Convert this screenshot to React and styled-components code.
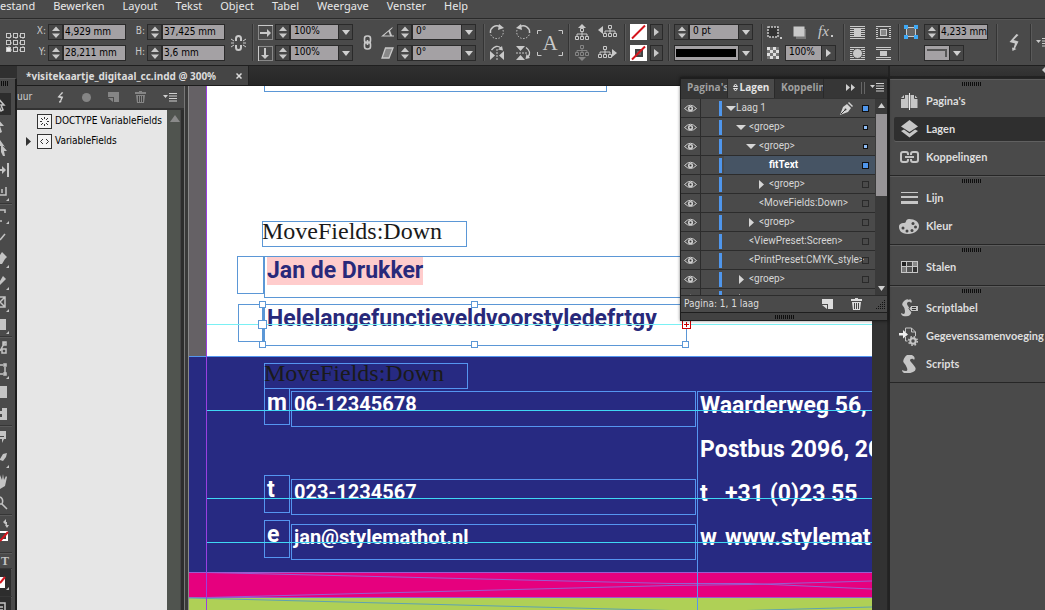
import React, { useState } from 'react';
import styled, { createGlobalStyle } from 'styled-components';

const GlobalStyle = createGlobalStyle`
  * { box-sizing: border-box; }
  body {
    margin: 0;
    background: #4a4a4a;
    overflow: hidden;
  }
  button, input, select {
    margin: 0;
    padding: 0;
    border: 0;
    border-radius: 0;
    background: none;
    color: inherit;
    font: inherit;
  }
  button { display: flex; align-items: center; justify-content: center; }
  ul { list-style: none; margin: 0; padding: 0; }
  svg { display: block; flex: none; }
`;

const Shell = styled.div`
  height: 100vh;
  display: flex;
  flex-direction: column;
  background: #4a4a4a;
  color: #dcdcdc;
  font-family: 'DejaVu Sans Condensed', 'DejaVu Sans', sans-serif;
  font-size: 10px;
  line-height: 14px;
`;

/* ---------- menu ---------- */

const MenuBar = styled.nav`
  display: flex;
  flex: none;
  gap: 18px;
  height: 18px;
  font-family: 'Noto Sans', sans-serif;
  font-size: 11px;
  line-height: 12px;
  white-space: nowrap;
`;

const MenuItem = styled.button`
  color: #e8e8e8;
  align-items: flex-start;
`;

/* ---------- control bar ---------- */

const ControlBar = styled.div`
  display: flex;
  flex: none;
  align-items: center;
  height: 48px;
  padding: 5px 0 4px 6px;
  border-top: 1px solid #2a2a2a;
  border-bottom: 1px solid #1f1f1f;
  box-shadow: inset 0 1px 0 #565656;
  color: #c9c9c9;
  overflow: hidden;
`;

const Divider = styled.span`
  flex: none;
  width: 2px;
  height: 37px;
  margin: 0 ${(p) => p.$after}px 0 ${(p) => p.$before}px;
  background: #343434;
  border-right: 1px solid #5a5a5a;
`;

const Stack = styled.div`
  display: grid;
  flex: none;
  grid-auto-rows: 16px;
  gap: 5px;
  margin-left: ${(p) => p.$ml || 0}px;
`;

const Row = styled.div`
  display: flex;
  align-items: center;
  gap: ${(p) => p.$gap || 0}px;
`;

const FieldGrid = styled.div`
  display: grid;
  flex: none;
  grid-template-columns: auto auto;
  grid-auto-rows: 16px;
  gap: 5px 9px;
  margin-left: 10px;
`;

const FieldLabel = styled.label`
  width: 12px;
  padding: 0 2px 2px 0;
  text-align: right;
`;

const SpinBox = styled.button`
  flex: none;
  width: 15px;
  height: 16px;
  border: 1px solid #2a2a2a;
  background: #474747;
`;

const ValueInput = styled.input`
  width: ${(p) => p.$w}px;
  height: 16px;
  padding: 0 0 2px 1px;
  border: 1px solid #2a2a2a;
  background: #a4a1a4;
  color: #000;
  line-height: 12px;
`;

const ComboBox = styled.span`
  display: grid;
  grid-template-columns: 1fr 14px;
  flex: none;
  width: ${(p) => p.$w}px;
  height: 16px;
  border: 1px solid #2a2a2a;
  background: #a4a1a4;
  color: #000;

  select {
    grid-area: 1 / 1 / 2 / 3;
    width: 100%;
    height: 14px;
    padding: 0 0 2px 3px;
    appearance: none;
    outline: none;
    line-height: 12px;
  }
  > span {
    grid-area: 1 / 2;
    display: flex;
    align-items: center;
    justify-content: center;
    border-left: 1px solid #2a2a2a;
    background: #474747;
    color: #d0d0d0;
    pointer-events: none;
  }
`;

const StrokePreview = styled.i`
  grid-area: 1 / 1;
  margin: 3px 2px 3px 1px;
  background: #000;
`;

const CornerPreview = styled.i`
  grid-area: 1 / 1;
  margin: 3px 2px 3px 2px;
  border-top: 2px solid #555;
  border-right: 2px solid #555;
`;

const IconButton = styled.button`
  flex: none;
  width: ${(p) => p.$w || 16}px;
  height: ${(p) => p.$h || 16}px;
  margin-left: ${(p) => p.$ml || 0}px;
  color: ${(p) => p.$color || 'inherit'};
`;

const ArrowButton = styled.button`
  width: 13px;
  height: 16px;
  border: 1px solid #2a2a2a;
  background: #474747;
`;

/* ---------- workspace ---------- */

const Workspace = styled.div`
  position: relative;
  flex: 1;
  min-height: 0;
  display: grid;
  grid-template-columns: 17px minmax(0, 1fr) 157px;
  background: #303030;
`;

const Toolbox = styled.aside`
  margin-top: 12px;
  border-right: 2px solid #1d1d1d;
  border-top: 1px solid #5a5a5a;
  background: #4a4a4a;
  color: #c4c4c4;
  overflow: hidden;
`;

const ToolGrip = styled.div`
  height: 14px;
  padding: 2px 0 0 1px;
`;

const Tool = styled.button`
  width: ${(p) => (p.$on ? 11 : 12)}px;
  height: ${(p) => p.$h || 22}px;
  justify-content: flex-start;
  background: ${(p) => (p.$on ? '#2d2d2d' : 'none')};
`;

const ToolLine = styled.div`
  height: 2px;
  margin-right: 3px;
  margin-bottom: -1px;
  background: #363636;
  border-bottom: 1px solid #5a5a5a;
`;

const Center = styled.div`
  display: flex;
  flex-direction: column;
  min-width: 0;
`;

const TabStrip = styled.div`
  flex: none;
  height: 20px;
  background: linear-gradient(#303030, #262626);
  border-bottom: 1px solid #1c1c1c;
`;

const DocumentTab = styled.div`
  display: flex;
  align-items: center;
  justify-content: space-between;
  width: 232px;
  height: 19px;
  padding: 0 6px 0 9px;
  background: #454545;
  border-right: 1px solid #222;
  font-family: 'Noto Sans', sans-serif;
  font-size: 10px;
  font-weight: 700;
  white-space: nowrap;
`;

const DocumentRow = styled.div`
  flex: 1;
  min-height: 0;
  display: flex;
`;

const StructurePanel = styled.section`
  flex: none;
  display: flex;
  flex-direction: column;
  width: 167px;
  background: #4a4a4a;
`;

const StructureHeader = styled.header`
  display: flex;
  align-items: center;
  height: 24px;
  border-bottom: 2px solid #333;
  color: #d0d0d0;
`;

const StructureBody = styled.div`
  flex: 1;
  display: grid;
  grid-template-columns: 1fr 14px 3px;
  background: #2d2d2d;
`;

const Tree = styled.ul`
  && { padding-top: 1px; }
  background: #e6e6e6;
  color: #000;
`;

const TreeItem = styled.li`
  display: flex;
  align-items: center;
  height: 20px;
  gap: 3px;
  padding-left: 8px;
  white-space: nowrap;
`;

const TreeArrow = styled.span`
  width: 9px;
`;

const StructureScroll = styled.div`
  padding: 5px 0 0 3px;
  background: #50544f;
  border-right: 1px solid #464646;
`;

const Splitter = styled.div`
  flex: none;
  width: 5px;
  background: #3a3a3a;
  border-left: 1px solid #777;
  border-right: 1px solid #8a8a8a;
`;

const DocumentScroll = styled.div`
  flex: none;
  width: 16px;
  background: #323232;
  border-right: 1px solid #252525;
`;

/* ---------- document ---------- */

const Canvas = styled.main`
  position: relative;
  flex: 1;
  min-width: 0;
  overflow: hidden;
  background: #656165;
`;

const Paper = styled.div`
  position: absolute;
  left: ${(p) => p.$x}px;
  right: 0;
  top: ${(p) => p.$y}px;
  height: ${(p) => p.$h}px;
  background: ${(p) => p.$color};
`;

const Frame = styled.div`
  position: absolute;
  left: ${(p) => p.$x}px;
  top: ${(p) => p.$y}px;
  width: ${(p) => p.$w}px;
  height: ${(p) => p.$h}px;
  border: 1px solid ${(p) => (p.$dark ? '#5596f0' : '#5b97d6')};
  white-space: nowrap;
`;

const Guide = styled.div`
  position: absolute;
  left: ${(p) => p.$x ?? 17}px;
  right: 0;
  top: ${(p) => p.$y}px;
  height: 1px;
  background: ${(p) => p.$color || '#3fd8f4'};
`;

const Margin = styled.div`
  position: absolute;
  left: 17px;
  top: 0;
  bottom: 0;
  width: 1px;
  background: #9a3fe0;
`;

const SerifLine = styled.p`
  margin: -4px 0 0 -1px;
  color: #1a1a1a;
  font-family: 'Liberation Serif', serif;
  font-size: 24px;
  line-height: 26px;
`;

const CardLine = styled.p`
  display: flex;
  margin: 0 0 16px;
  padding-left: 2px;
  color: ${(p) => p.$color || '#fff'};
  font-family: Roboto, sans-serif;
  font-size: ${(p) => (p.$small ? 20 : 23)}px;
  font-weight: 700;
  line-height: ${(p) => (p.$small ? 24 : 28)}px;

  mark {
    background: #ffcccc;
    color: inherit;
  }
  abbr { width: 25px; }
`;

const Handle = styled.span`
  position: absolute;
  left: ${(p) => p.$x};
  top: ${(p) => p.$y};
  width: ${(p) => p.$s || 7}px;
  height: ${(p) => p.$s || 7}px;
  margin: ${(p) => (p.$s ? '-5px' : '-4px')};
  border: 1px solid #5b97d6;
  background: #fff;
`;

const OutPort = styled.span`
  position: absolute;
  left: 100%;
  top: 50%;
  margin: -5px -4px;
`;

const Waves = styled.svg`
  position: absolute;
  left: 0;
  top: 486px;
`;

/* ---------- layers panel ---------- */

const FloatingPanel = styled.section`
  position: absolute;
  right: 157px;
  top: 11px;
  width: 208px;
  padding: 2px 1px 1px;
  background: #1e1e1e;
  box-shadow: 0 0 3px rgba(0, 0, 0, 0.5);
`;

const PanelTabs = styled.div`
  display: flex;
  height: 19px;
  background: #363636;
  color: #a0a0a0;
  font-family: 'Open Sans', sans-serif;
  font-size: 10px;
  font-weight: 700;
  white-space: nowrap;
`;

const PanelTab = styled.button`
  flex: none;
  width: ${(p) => p.$w}px;
  gap: 2px;
  padding-left: ${(p) => (p.$on ? 0 : 6)}px;
  padding-bottom: 3px;
  justify-content: ${(p) => (p.$on ? 'center' : 'flex-start')};
  overflow: hidden;
  background: ${(p) => (p.$on ? '#4a4a4a' : 'transparent')};
  color: ${(p) => (p.$on ? '#e4e4e4' : 'inherit')};
  border-right: 1px solid #2a2a2a;
`;

const PanelTools = styled.div`
  flex: 1;
  display: flex;
  align-items: center;
  justify-content: flex-end;
  gap: 5px;
  padding: 0 3px 2px 0;
  color: #cfcfcf;
`;

const PanelBody = styled.div`
  display: grid;
  grid-template-columns: 1fr 12px;
  height: 197px;
  border-top: 1px solid #333;
  background: #4a4a4a;
`;

const LayerList = styled.ul`
  overflow: hidden;
`;

const LayerRow = styled.li`
  display: grid;
  grid-template-columns: 20px 18px 3px 1fr;
  height: 19px;
  border-bottom: 1px solid #2c2c2c;
`;

const EyeCell = styled.button`
  border-right: 1px solid #2c2c2c;
  color: #cfcfcf;
`;

const LayerColor = styled.span`
  grid-column: 3;
  margin: 2px 0 1px;
  background: #4f96ec;
`;

const LayerName = styled.div`
  display: flex;
  align-items: center;
  margin-left: 2px;
  padding-left: ${(p) => 2 + p.$level * 10}px;
  padding-right: 6px;
  background: ${(p) => (p.$on ? '#465464' : 'none')};
  color: ${(p) => (p.$on ? '#fff' : '#d6d6d6')};
  font-family: Roboto, sans-serif;
  font-weight: ${(p) => (p.$on ? 700 : 400)};
  white-space: nowrap;
  min-width: 0;

  > span:first-child {
    flex: none;
    width: ${(p) => (p.$level ? 13 : 10)}px;
  }
  > b {
    flex: 1;
    width: 0;
    font-weight: inherit;
  }
`;

const Target = styled.i`
  flex: none;
  width: ${(p) => (p.$kind === 'small' ? 5 : 7)}px;
  height: ${(p) => (p.$kind === 'small' ? 5 : 7)}px;
  margin: ${(p) => (p.$kind === 'small' ? 1 : 0)}px;
  border: 1px solid ${(p) => (p.$kind === 'none' ? '#2a2a2a' : '#111')};
  background: ${(p) => ({ full: '#4f96ec', small: '#8fbdf5' }[p.$kind] || 'none')};
`;

const LayerScroll = styled.div`
  display: flex;
  flex-direction: column;
  align-items: center;
  background: #3a3a3a;
  color: #d0d0d0;
  padding: 4px 0 4px;

  > i {
    width: 11px;
    height: 82px;
    margin: 6px 0 auto;
    background: #979497;
  }
`;

const PanelFooter = styled.footer`
  display: flex;
  align-items: center;
  height: 17px;
  padding: 0 2px 0 3px;
  background: #4a4a4a;
  border-top: 1px solid #2c2c2c;

  > span { flex: 1; }
`;

const PanelGrip = styled.div`
  display: flex;
  align-items: center;
  justify-content: center;
  height: 7px;
  margin-top: 1px;
  background: #424242;
`;

const ResizeCorner = styled.span`
  && { flex: none; }
  margin-left: 14px;
`;

/* ---------- dock ---------- */

const Dock = styled.aside`
  background: #4a4a4a;
  border-left: 2px solid #222;
`;

const DockHeader = styled.div`
  display: flex;
  align-items: center;
  justify-content: flex-end;
  height: 12px;
  padding-bottom: 2px;
  background: linear-gradient(#383838, #303030);
  border-bottom: 2px solid #222;
  color: #ccc;
`;

const DockGroup = styled.div`
  display: grid;
  border-top: 1px solid #262626;
  padding-bottom: 4px;

  &:last-child { border-bottom: 1px solid #262626; }
`;

const DockGrip = styled.div`
  display: flex;
  justify-content: center;
  height: 8px;
  padding: 2px 0 0 7px;
  border-top: 1px solid #5c5c5c;
`;

const DockItem = styled.button`
  display: flex;
  align-items: center;
  justify-content: flex-start;
  gap: 7px;
  height: 24px;
  margin: 2px 0 2px 4px;
  padding-left: 5px;
  border-radius: 2px 0 0 2px;
  background: ${(p) => (p.$on ? '#2f2f2f' : 'transparent')};
  box-shadow: ${(p) => (p.$on ? '0 1px 0 #606060' : 'none')};
  color: #dedede;
  font-family: Lato, sans-serif;
  font-size: 11px;
  font-weight: 700;
  white-space: nowrap;
`;

const DockIcon = styled.span`
  display: flex;
  justify-content: center;
  width: 20px;
  color: #c6c6c6;
`;

/* ---------- icons ---------- */

const Svg = ({ w, h, children, ...rest }) => (
  <svg width={w} height={h} viewBox={`0 0 ${w} ${h}`} fill="currentColor" aria-hidden="true" {...rest}>
    {children}
  </svg>
);

const line = { fill: 'none', stroke: 'currentColor' };

const Down = ({ s = 7 }) => <Svg w={s} h={5}><path d={`M0 0h${s}l-${s / 2} 5z`} /></Svg>;
const Up = ({ s = 7 }) => <Svg w={s} h={5}><path d={`M0 5h${s}l-${s / 2} -5z`} /></Svg>;
const Right = () => <Svg w={5} h={8}><path d="M0 0v8l5-4z" /></Svg>;
const Updown = () => <Svg w={8} h={12}><path d="M0 5h8l-4-4.500zM0 7.500h8l-4 4.500z" /></Svg>;
const Grip = () => (
  <Svg w={19} h={4} color="#0e0e0e">
    {Array.from({ length: 10 }).map((_, i) => <rect key={i} x={i * 2} width="1" height="4" />)}
  </Svg>
);

const MenuGlyph = () => <Svg w={14} h={9}><path d="M0 2h5l-2.500 3zM6 0h8v1h-8zM6 2.500h8v1h-8zM6 5h8v1h-8zM6 7.500h8v1h-8z" /></Svg>;

const Bolt = ({ w = 12, h = 17 }) => (
  <svg width={w} height={h} viewBox="0 0 12 17" fill="currentColor" aria-hidden="true">
    <path d="M7.500 0 0.500 8l5.500 1.500-1.500 4.500-1.500-.5.5 3.500 4-2-1.500-.5 3.500-7-5-1.500 5-5z" />
  </svg>
);

const PageNew = () => <Svg w={11} h={10}><path d="M0 0h11v10h-5v-5h-6zM0 6h5v4z" /></Svg>;

const Trash = () => (
  <Svg w={11} h={12}>
    <path d="M4 0h3v1h4v2h-11v-2h4z" />
    <path d="M1 4h9l-1 8h-7z" />
    <path d="M3.500 5v6M5.500 5v6M7.500 5v6" stroke="#444" fill="none" />
  </Svg>
);

const RefPoint = () => (
  <Svg w={20} h={20} {...line}>
    <path d="M3 3h14M3 10h14M3 17h14M3 3v14M10 3v14M17 3v14" strokeDasharray="1 1" />
    {[0.5, 7.5, 14.5].map((y) => [0.5, 7.5, 14.5].map((x) => (
      <rect key={`${x}${y}`} x={x} y={y} width="4" height="4" fill={x < 1 && y > 14 ? '#eee' : '#4a4a4a'} />
    )))}
  </Svg>
);

const BrokenLink = () => (
  <Svg w={15} h={16} {...line}>
    <path d="M5 6V3.500Q5 1 7.500 1T10 3.500V6M5 10v2.500Q5 15 7.500 15T10 12.500V10" strokeWidth="2" />
    <path d="M0 4l3 2M0 8h3M0 12l3-2M15 4l-3 2M15 8h-3M15 12l-3-2" />
  </Svg>
);

const Chain = () => (
  <Svg w={9} h={15} {...line} strokeWidth="1.6">
    <rect x="1.500" y="1" width="6" height="7" rx="2.500" />
    <rect x="1.500" y="7" width="6" height="7" rx="2.500" />
    <path d="M4.500 5v5" />
  </Svg>
);

const ScaleX = ({ vertical }) => (
  <Svg w={15} h={15}>
    <rect x=".5" y=".5" width="14" height="14" {...line} strokeDasharray="1 1" />
    {vertical ? <path d="M0 0h1v15h-1z" /> : <path d="M0 0h15v1h-15z" />}
    <path d="M2 7h7v-3l4 4-4 4v-3h-7z" transform={vertical ? 'rotate(90 7.500 7.500)' : undefined} />
  </Svg>
);

const Angle = () => <Svg w={13} h={10}><path d="M0 9.500 11.500 0v1L9 3.500l2 5h2v1zM3 8.500h6L7.500 4.500z" fillRule="evenodd" /></Svg>;
const Shear = () => <Svg w={13} h={12} {...line}><path d="M4.500 1h7.500l-4 10h-7z" fill="#888" strokeWidth="1.300" /></Svg>;

const Rotate = ({ ccw }) => (
  <Svg w={16} h={16} {...line}>
    <g transform={ccw ? 'translate(16 0) scale(-1 1)' : undefined}>
      <path d="M1.500 9A6.500 6.500 0 0 1 11 2.500" strokeWidth="1.500" />
      <path d="M14 6a6.500 6.500 0 1 1-12.500 4" strokeDasharray="1.500 1.500" />
      <path d="M10 0l5 4-6 2z" fill="currentColor" stroke="none" />
    </g>
  </Svg>
);

const Flip = ({ vertical }) => (
  <Svg w={16} h={16}>
    <g transform={vertical ? 'rotate(90 8 8)' : undefined}>
      <path d="M1 6v9l5-4.500zM15 6v9l-5-4.500z" />
      <path d="M8 4v12" {...line} strokeDasharray="2 1" />
      <path d="M2.500 5Q7-1 12 3" {...line} strokeWidth="1.300" />
      <path d="M14 5.500l-5-1 4-3.500z" />
    </g>
  </Svg>
);

const CharFrame = () => (
  <Svg w={26} h={26}>
    <path d="M.5 4v-3.500h4M21.500.5h4v3.500M.5 22v3.500h4M21.500 25.500h4v-3.500" {...line} />
    <text x="13" y="20" textAnchor="middle" fontFamily="Liberation Serif, serif" fontSize="21">A</text>
  </Svg>
);

const NODES = 'M5.500 4.500h3v3h-3zM.5 12.500h3v3h-3zM5.500 12.500h3v3h-3zM10.500 12.500h3v3h-3z';

const Hierarchy = ({ dir }) => (
  <Svg w={dir ? 19 : 14} h={16}>
    <g transform={dir && `translate(${dir === 'left' ? 5 : 0} -3)`}>
      <path d={NODES} {...line} />
      <path d="M7 8v4M2 12v-2h10v2" {...line} />
    </g>
    {dir === 'left' && <path d="M5 2v8l-5-4z" />}
    {dir === 'right' && <path d="M14 4v8l5-4z" />}
    {!dir && <path d="M3 4h8l-4-4z" />}
  </Svg>
);

const HierarchyDown = () => (
  <Svg w={14} h={16} color="#858585">
    <path d="M5.500.5h3v3h-3zM.5 7.500h3v3h-3zM5.500 7.500h3v3h-3zM10.500 7.500h3v3h-3zM7 3.500v4M2 7.500v-2h10v2" {...line} />
    <path d="M3 12h8l-4 4z" />
  </Svg>
);

const Swatch = ({ stroke }) => (
  <Svg w={17} h={16}>
    <rect width="17" height="16" fill="#fff" />
    {stroke && <rect x="6" y="5" width="6" height="6" fill="#666" stroke="#444" strokeWidth="2" />}
    <path d="M2 14.500 15 1.500" stroke="#d4141c" strokeWidth="2" />
  </Svg>
);

const DashedBox = () => (
  <Svg w={16} h={13}>
    <rect x="1" y="1" width="10" height="10" fill="#333" stroke="currentColor" strokeWidth="1.500" strokeDasharray="2 1" />
    <rect x="13" y="11" width="2" height="2" />
  </Svg>
);
const DropShadow = () => <Svg w={14} h={13}><rect x="3" y="3" width="10" height="10" fill="#777" /><rect x=".5" y=".5" width="11" height="10" /></Svg>;
const Fx = () => (
  <Svg w={17} h={16} overflow="visible">
    <text x="1" y="12" fontFamily="Liberation Serif, serif" fontStyle="italic" fontSize="15">fx</text>
    <rect x="14" y="11" width="2" height="2" />
  </Svg>
);
const Checker = () => (
  <Svg w={12} h={12}>
    <rect width="12" height="12" fill="#777" />
    <path d="M0 0h3v3h-3zM6 0h3v3h-3zM3 3h3v3h-3zM9 3h3v3h-3zM0 6h3v3h-3zM6 6h3v3h-3zM3 9h3v3h-3zM9 9h3v3h-3z" fill="#e0e0e0" />
  </Svg>
);

const Wrap = ({ kind }) => (
  <Svg w={15} h={13}>
    <path d="M0 .5h15M0 2.500h15M0 4.500h15M0 6.500h15M0 8.500h15M0 10.500h15M0 12.500h15" {...line} />
    {kind === 0 && <rect x="4" y="3" width="7" height="8" />}
    {kind === 1 && <g><rect x="2" y="2" width="11" height="9" fill="#4a4a4a" /><rect x="4.500" y="3.500" width="6" height="6" fill="#888" stroke="currentColor" /></g>}
    {kind === 2 && <circle cx="7.500" cy="6.500" r="5" stroke="#4a4a4a" />}
    {kind === 3 && <g><rect y="3" width="15" height="7" fill="#4a4a4a" /><rect x="4" y="4" width="7" height="5" /></g>}
  </Svg>
);

const FitFrame = () => (
  <Svg w={14} h={14}>
    <rect x="2.500" y="2.500" width="9" height="9" fill="#666" stroke="currentColor" />
    <path d="M0 0h4v4h-4zM10 0h4v4h-4zM0 10h4v4h-4zM10 10h4v4h-4z" fill="#3fa9f5" />
  </Svg>
);

const Eye = () => (
  <Svg w={13} h={9}>
    <path d="M.5 4.500Q6.500-2 12.500 4.500Q6.500 10.500.5 4.500z" {...line} />
    <circle cx="6.500" cy="4.500" r="2.600" />
    <circle cx="6.500" cy="4.500" r="1" fill="#333" />
  </Svg>
);

const Pen = () => (
  <Svg w={13} h={13}>
    <path d="M0 13 3 5l4-3 4 4-3 4z" />
    <path d="M8 1l1-1 4 4-1 1z" />
    <path d="M1 12l4-4" stroke="#3a3a3a" />
    <circle cx="5.500" cy="7.500" r="1" fill="#3a3a3a" />
  </Svg>
);

const ToolGlyph = ({ d, stroke, flag }) => (
  <Svg w={12} h={18}>
    <path d={d} fill={stroke ? 'none' : 'currentColor'} stroke={stroke ? 'currentColor' : 'none'} strokeWidth="1.500" />
    {flag && <path d="M9 15v3h-3z" />}
  </Svg>
);

const DOCK_ICONS = {
  pages: (
    <Svg w={19} h={17}>
      <path d="M1 5l3-3h4.500v13h-7.500zM10.500 2h4l3 3v10h-7z" />
      <path d="M9.500 0v17" stroke="#eee" />
      <path d="M1 5.500h3.500v-3.500M18 5.500h-3.500v-3.500" stroke="#444" fill="none" />
    </Svg>
  ),
  layers: (
    <Svg w={19} h={18}>
      <path d="M9.500 0 18 6.500 9.500 12 1 6.500z" />
      <path d="M1 11l3-1.500 5.500 4 5.500-4 3 1.500-8.500 6.500z" />
    </Svg>
  ),
  links: (
    <Svg w={19} h={12} {...line} strokeWidth="2">
      <path d="M8 4V3Q8 1 6 1H3Q1 1 1 3v6q0 2 2 2h3q2 0 2-2V8M11 4V3q0-2 2-2h3q2 0 2 2v6q0 2-2 2h-3q-2 0-2-2V8M5 6h9" />
    </Svg>
  ),
  stroke: <Svg w={19} h={13}><path d="M1 0h17v1h-17zM1 4h17v2h-17zM1 9h17v3h-17z" /></Svg>,
  color: (
    <Svg w={20} h={15}>
      <path d="M10 0c6 0 10 3 10 7s-4 8-11 8S0 11 0 8s2-4 5-4c3 0 1-4 5-4z" />
      <g fill="#444"><circle cx="4" cy="9" r="1.500" /><circle cx="8" cy="12" r="1.500" /><circle cx="13" cy="11.500" r="1.500" /><circle cx="16.500" cy="8" r="1.500" /><circle cx="14" cy="4.500" r="1.500" /></g>
    </Svg>
  ),
  swatches: (
    <Svg w={17} h={12}>
      <path d="M0 0h17v12h-17z" />
      <path d="M1 1h4v4h-4z" fill="#222" /><path d="M6 1h5v4h-5z" fill="#444" /><path d="M12 1h4v4h-4z" fill="#888" />
      <path d="M1 6h4v5h-4z" fill="#777" /><path d="M6 6h5v5h-5z" fill="#555" /><path d="M12 6h4v5h-4z" fill="#333" />
    </Svg>
  ),
  label: (
    <Svg w={19} h={18}>
      <path d="M10 0q3 2 1 4-1-2-3-1t0 4 3 5-1 4-7 1q-2-1-2-3 2 1 3 1t1-3-2-5 1-5 5-1z" />
      <path d="M9 9.500l2-3h7.500v6h-7.500z" stroke="#444" />
      <path d="M12 8.500h4M12 10.500h4" stroke="#333" />
    </Svg>
  ),
  merge: (
    <Svg w={20} h={19}>
      <path d="M6.500 5v-4h6l4 4v4M6.500 10v4h2M12.500 1v4h4" {...line} />
      <path d="M0 6h4v-3l5 4.500-5 4v-3h-4z" fill="#eee" />
      <circle cx="14" cy="14" r="2.700" fill="none" stroke="currentColor" strokeWidth="2" />
      <circle cx="14" cy="14" r="4.300" fill="none" stroke="currentColor" strokeWidth="1.500" strokeDasharray="1.700 1.700" />
    </Svg>
  ),
  scripts: (
    <Svg w={19} h={18}>
      <path d="M12 0q4 2 2 5-1-2-3-1t0 3 4 5-2 5-9 1q-2-1-2-3 2 1 4 1t1-3-3-5 1-6 7-2z" />
    </Svg>
  ),
};

/* ---------- data ---------- */

const MENUS = ['estand', 'Bewerken', 'Layout', 'Tekst', 'Object', 'Tabel', 'Weergave', 'Venster', 'Help'];

const MEASURES = [
  ['X:', '4,929 mm'],
  ['B:', '37,425 mm'],
  ['Y:', '28,211 mm'],
  ['H:', '3,6 mm'],
];

const LAYERS = [
  { name: 'Laag 1', level: 0, open: true, target: 'full', pen: true },
  { name: '<groep>', level: 1, open: true, target: 'small' },
  { name: '<groep>', level: 2, open: true, target: 'small' },
  { name: 'fitText', level: 3, target: 'full', leaf: true },
  { name: '<groep>', level: 3, target: 'none' },
  { name: '<MoveFields:Down>', level: 2, target: 'none', leaf: true },
  { name: '<groep>', level: 2, target: 'none' },
  { name: '<ViewPreset:Screen>', level: 1, target: 'none', leaf: true },
  { name: '<PrintPreset:CMYK_style>', level: 1, target: 'none', leaf: true },
  { name: '<groep>', level: 1, target: 'none' },
  { name: '', level: 1, target: 'none' },
];

const DOCK = [
  [['pages', "Pagina's"], ['layers', 'Lagen'], ['links', 'Koppelingen']],
  [['stroke', 'Lijn'], ['color', 'Kleur']],
  [['swatches', 'Stalen']],
  [['label', 'Scriptlabel'], ['merge', 'Gegevenssamenvoeging'], ['scripts', 'Scripts']],
];

const TOOLS = [
  [
    { name: 'Selectie', d: 'M-4 1l8 9h-3l2 5-2 1-2-5-3 2z', stroke: true, on: true },
    { name: 'Direct selecteren', d: 'M-4 0l8 9h-4l2 6-2 1-2-6-2 2z' },
    { name: 'Pagina', d: 'M0 1l5 7v-1h-5zM1 5l6 7h-3l1 5-2 0-2-4z' },
    { name: 'Tussenruimte', d: 'M0 8h2v-3l4 4-4 4v-3h-2zM7 2h2v14h-2z' },
    { name: 'Inhoud', d: 'M0 12h6v-8M2 6v4', stroke: true, flag: true },
  ],
  [
    { name: 'Tekst', d: 'M0 4h5v3M0 15h2', stroke: true, flag: true },
    { name: 'Lijn', d: 'M0 12l5-6', stroke: true },
    { name: 'Pen', d: 'M0 5l2-3 5 5-2 2-3 5h-2z', flag: true },
    { name: 'Potlood', d: 'M0 9l3-5 3 3-6 6z', flag: true },
    { name: 'Rechthoekkader', d: 'M0 3h5v10h-5M5 3l-5 5 5 5', stroke: true, flag: true },
    { name: 'Rechthoek', d: 'M0 3h6v11h-6z', flag: true },
  ],
  [
    { name: 'Schaar', d: 'M0 12l5-9M3 3h3v3h-3zM2 10h4v4h-4z', stroke: true },
    { name: 'Vrije transformatie', d: 'M4 3h2v2h-2zM5 6v6M0 4h3M0 13h3M4 12h2v2h-2z', stroke: true, flag: true },
    { name: 'Verloop', d: 'M0 3h7v12h-7z' },
    { name: 'Doezelaar', d: 'M0 3h7v12h-7v-3h2v-3h-2v-3h2v-3M4 6h2v3h-2zM4 11h2v3h-2z' },
  ],
  [
    { name: 'Notitie', d: 'M0 3h6v8h-2l-2 4v-4h-2v-2h4v-1h-4z' },
    { name: 'Pipet', d: 'M0 9l3-5 4-1-1 4-3 4-3-1z', flag: true },
    { name: 'Handje', d: 'M0 3l2 5 1-6 1 6 2-4 1 1-2 9-5 3z' },
    { name: 'Zoomen', d: 'M0 3q4 2 2 7l5 5M0 10h2', stroke: true },
  ],
];

const Spin = ({ label }) => (
  <SpinBox type="button" aria-label={label}><Updown /></SpinBox>
);

const Combo = ({ w, value, label, right, children }) => (
  <ComboBox $w={w}>
    {children}
    <select aria-label={label} defaultValue={value}>
      <option value={value}>{value}</option>
    </select>
    <span>{right ? <Right /> : <Down s={8} />}</span>
  </ComboBox>
);

function Controls() {
  return (
    <ControlBar>
      <IconButton $w={20} $h={20} type="button" aria-label="Referentiepunt"><RefPoint /></IconButton>
      <FieldGrid>
        {MEASURES.map(([label, value]) => (
          <Row key={label}>
            <FieldLabel htmlFor={`field-${label[0]}`}>{label}</FieldLabel>
            <Spin label={`${label} aanpassen`} />
            <ValueInput id={`field-${label[0]}`} $w={63} defaultValue={value} />
          </Row>
        ))}
      </FieldGrid>
      <IconButton $w={15} $ml={6} type="button" aria-label="Verhouding behouden"><BrokenLink /></IconButton>
      <Divider $before={6} $after={4} />
      <Stack>
        <Row $gap={2}><ScaleX /><Row><Spin label="Schaal X" /><Combo w={63} value="100%" label="Schaal X" /></Row></Row>
        <Row $gap={2}><ScaleX vertical /><Row><Spin label="Schaal Y" /><Combo w={63} value="100%" label="Schaal Y" /></Row></Row>
      </Stack>
      <IconButton $w={10} $ml={9} type="button" aria-label="Schaal koppelen"><Chain /></IconButton>
      <Stack $ml={9}>
        <Row $gap={3}><Angle /><Row><Spin label="Rotatie" /><Combo w={64} value="0°" label="Rotatie" /></Row></Row>
        <Row $gap={3}><Shear /><Row><Spin label="Schuintrekken" /><Combo w={64} value="0°" label="Schuintrekken" /></Row></Row>
      </Stack>
      <Divider $before={7} $after={4} />
      <Stack>
        <Row $gap={10}>
          <IconButton type="button" aria-label="Rechtsom roteren"><Rotate /></IconButton>
          <IconButton type="button" aria-label="Linksom roteren"><Rotate ccw /></IconButton>
        </Row>
        <Row $gap={10}>
          <IconButton type="button" aria-label="Horizontaal omdraaien"><Flip /></IconButton>
          <IconButton type="button" aria-label="Verticaal omdraaien"><Flip vertical /></IconButton>
        </Row>
      </Stack>
      <IconButton $w={26} $h={26} $ml={6} type="button" aria-label="Transformatie"><CharFrame /></IconButton>
      <Divider $before={5} $after={5} />
      <Stack>
        <Row $gap={9}><Hierarchy /><Hierarchy dir="left" /></Row>
        <Row $gap={9}><HierarchyDown /><Hierarchy dir="right" /></Row>
      </Stack>
      <Divider $before={7} $after={4} />
      <Stack>
        <Row $gap={3}><Swatch /><ArrowButton type="button" aria-label="Vulling"><Right /></ArrowButton></Row>
        <Row $gap={3}><Swatch stroke /><ArrowButton type="button" aria-label="Lijnkleur"><Right /></ArrowButton></Row>
      </Stack>
      <Divider $before={5} $after={4} />
      <Stack>
        <Row><Spin label="Lijndikte" /><Combo w={64} value="0 pt" label="Lijndikte" /></Row>
        <Combo w={79} value="" label="Lijntype"><StrokePreview /></Combo>
      </Stack>
      <Divider $before={8} $after={4} />
      <Stack>
        <Row $gap={10}><DashedBox /><DropShadow /><Fx /></Row>
        <Row $gap={6}><Checker /><Combo w={51} value="100%" label="Dekking" right /></Row>
      </Stack>
      <Divider $before={7} $after={5} />
      <Stack>
        <Row $gap={11}><Wrap kind={0} /><Wrap kind={1} /></Row>
        <Row $gap={11}><Wrap kind={2} /><Wrap kind={3} /></Row>
      </Stack>
      <Divider $before={7} $after={4} />
      <Stack>
        <Row $gap={6}>
          <FitFrame />
          <Row><Spin label="Hoekgrootte" /><ValueInput aria-label="Hoekgrootte" $w={49} defaultValue="4,233 mm" /></Row>
        </Row>
        <Row $gap={6}>
          <Svg w={14} h={14} />
          <Combo w={40} value="" label="Hoekvorm"><CornerPreview /></Combo>
        </Row>
      </Stack>
      <Divider $before={8} $after={11} />
      <IconButton $w={12} $h={20} type="button" aria-label="Snel toepassen"><Bolt /></IconButton>
      <Divider $before={9} $after={4} />
      <IconButton $w={14} type="button" aria-label="Menu"><MenuGlyph /></IconButton>
    </ControlBar>
  );
}

function Tools() {
  return (
    <Toolbox>
      <ToolGrip><Svg w={8} h={5} color="#0e0e0e"><path d="M0 0h1v5h-1zM2 0h1v5h-1zM4 0h1v5h-1zM6 0h1v5h-1z" /></Svg></ToolGrip>
      {TOOLS.map((group, i) => (
        <div key={i}>
          {group.map((tool) => (
            <Tool key={tool.name} type="button" aria-label={tool.name} $on={tool.on}>
              <ToolGlyph {...tool} />
            </Tool>
          ))}
          <ToolLine />
        </div>
      ))}
      <Tool type="button" aria-label="Vulling en lijn" $h={37}>
        <Svg w={12} h={30}>
          <path d="M4 5h3v4M3 5l3-3v6zM5 8h4l-2 3z" transform="translate(0 -2)" />
          <path d="M0 12h8v10h-8z" fill="#fff" />
          <path d="M0 14h6v6h-6z" fill="#444" />
          <path d="M0 22l8-9" stroke="#d4141c" strokeWidth="2" />
        </Svg>
      </Tool>
      <ToolLine />
      <Tool type="button" aria-label="Opmaak van tekst" $h={15}>
        <Svg w={12} h={12}><text x="1" y="10" fontFamily="Liberation Serif, serif" fontWeight="700" fontSize="12">T</text></Svg>
      </Tool>
      <ToolLine />
      <Tool type="button" aria-label="Geen" $h={27} $on>
        <Svg w={10} h={16}>
          <path d="M0 2h5v11h-5z" fill="#fff" />
          <path d="M0 8l5-6" stroke="#d4141c" strokeWidth="2" />
          <path d="M9 12v3h-3z" />
        </Svg>
      </Tool>
      <ToolLine />
      <Tool type="button" aria-label="Weergavemodus" $on><ToolGlyph d="M0 4h5v12M0 8h3M0 11h3" stroke /></Tool>
    </Toolbox>
  );
}

function Structure() {
  return (
    <StructurePanel aria-label="Structuur">
      <StructureHeader>
        <span>uur</span>
        <IconButton $w={9} $ml={24} type="button" aria-label="Valideren"><Bolt w={8} h={11} /></IconButton>
        <IconButton $w={9} $ml={17} $color="#858585" type="button" aria-label="Attribuut"><Svg w={9} h={9}><circle cx="4.500" cy="4.500" r="4.500" /></Svg></IconButton>
        <IconButton $w={11} $ml={17} $color="#858585" type="button" aria-label="Nieuw element"><PageNew /></IconButton>
        <IconButton $w={11} $ml={16} $color="#858585" type="button" aria-label="Verwijderen"><Trash /></IconButton>
        <IconButton $w={14} $ml={17} type="button" aria-label="Structuurmenu"><MenuGlyph /></IconButton>
      </StructureHeader>
      <StructureBody>
        <Tree>
          <TreeItem>
            <TreeArrow />
            <Svg w={15} h={15} color="#333">
              <rect x=".5" y=".5" width="14" height="14" fill="#f4f4f4" stroke="#333" />
              <path d="M4 4l2 2M11 4l-2 2M4 11l2-2M11 11l-2-2M7.500 3v2M7.500 10v2M3 7.500h2M10 7.500h2" {...line} />
            </Svg>
            <span>DOCTYPE VariableFields</span>
          </TreeItem>
          <TreeItem>
            <TreeArrow><Svg w={6} h={9} color="#333"><path d="M1 0v9l5-4.500z" /></Svg></TreeArrow>
            <Svg w={15} h={15} color="#333">
              <rect x=".5" y=".5" width="14" height="14" fill="#f4f4f4" stroke="#333" />
              <path d="M6 5l-2.500 2.500 2.500 2.500M9 5l2.500 2.500-2.500 2.500" {...line} />
            </Svg>
            <span>VariableFields</span>
          </TreeItem>
        </Tree>
        <StructureScroll><Svg w={10} h={7} color="#8a8a8a"><path d="M0 7h10L5 0z" /></Svg></StructureScroll>
      </StructureBody>
    </StructurePanel>
  );
}

function DocumentCanvas() {
  const navy = '#28297a';
  return (
    <Canvas>
      <Paper $x={17} $y={0} $h={270} $color="#fff" />
      <Paper $x={0} $y={270} $h={216} $color="#272a82" />
      <Paper $x={0} $y={486} $h={25} $color="#e6007e" />
      <Paper $x={0} $y={511} $h={200} $color="#afd056" />
      <Waves width="683" height="44" fill="none" stroke="#9a5cd0">
        <path d="M0 .5H683M0 25.500H683" />
        <path d="M18 .5L482 11.500H560L683 17" />
        <path d="M18 25.500L482 13.500L560 12.500L683 9" />
        <path d="M0 26L20 26.500 500 39M683 35L540 39" stroke="#5fa3b0" />
      </Waves>
      <Frame $x={75} $y={-20} $w={343} $h={26} />
      <Frame $x={73} $y={135} $w={205} $h={26}><SerifLine>MoveFields:Down</SerifLine></Frame>
      <Frame $x={48} $y={170} $w={27} $h={38} />
      <Frame $x={75} $y={170} $w={640} $h={42}>
        <CardLine $color={navy}><mark>Jan de Drukker</mark></CardLine>
      </Frame>
      <Frame $x={49} $y={218} $w={26} $h={38} />
      <Frame $x={75} $y={218} $w={423} $h={42}>
        <CardLine $color={navy}>Helelangefunctieveldvoorstyledefrtgy</CardLine>
      </Frame>
      <Guide $y={238} $color="#7af0f4" />
      <Frame $x={73} $y={218} $w={425} $h={42}>
        <Handle $x="0%" $y="0%" />
        <Handle $x="50%" $y="0%" />
        <Handle $x="0%" $y="100%" />
        <Handle $x="50%" $y="100%" />
        <Handle $x="100%" $y="100%" />
        <Handle $x="0%" $y="50%" $s={9} />
        <OutPort>
          <Svg w={9} h={9}><rect x=".5" y=".5" width="8" height="8" fill="#fff" stroke="#c00" /><path d="M4.500 2v5M2 4.500h5" stroke="#c00" /></Svg>
        </OutPort>
      </Frame>

      <Guide $x={0} $y={270} $color="#5596f0" />
      <Frame $dark $x={75} $y={277} $w={204} $h={26}><SerifLine>MoveFields:Down</SerifLine></Frame>
      <Frame $dark $x={75} $y={302} $w={26} $h={37}><CardLine>m</CardLine></Frame>
      <Frame $dark $x={102} $y={305} $w={405} $h={36}><CardLine $small>06-12345678</CardLine></Frame>
      <Frame $dark $x={75} $y={389} $w={26} $h={38}><CardLine>t</CardLine></Frame>
      <Frame $dark $x={102} $y={393} $w={405} $h={36}><CardLine $small>023-1234567</CardLine></Frame>
      <Frame $dark $x={75} $y={434} $w={26} $h={38}><CardLine>e</CardLine></Frame>
      <Frame $dark $x={102} $y={438} $w={405} $h={36}><CardLine $small>jan@stylemathot.nl</CardLine></Frame>
      <Frame $dark $x={508} $y={305} $w={300} $h={400}>
        <CardLine>Waarderweg 56,</CardLine>
        <CardLine>Postbus 2096, 20</CardLine>
        <CardLine><abbr>t</abbr>+31 (0)23 55</CardLine>
        <CardLine><abbr>w</abbr>www.stylemat</CardLine>
      </Frame>
      <Guide $y={324} />
      <Guide $y={412} />
      <Guide $y={456} />
      <Margin />
    </Canvas>
  );
}

function LayersPanel() {
  const [selected, setSelected] = useState(3);
  return (
    <FloatingPanel aria-label="Lagen">
      <PanelTabs>
        <PanelTab $w={47} type="button">Pagina's</PanelTab>
        <PanelTab $w={47} $on type="button">
          <Svg w={5} h={9} {...line}><path d="M.5 3.500l2-2.500 2 2.500zM.5 5.500l2 2.500 2-2.500z" /></Svg>
          Lagen
        </PanelTab>
        <PanelTab $w={49} type="button">Koppelin</PanelTab>
        <PanelTools>
          <Svg w={10} h={7}><path d="M0 0v7l4-3.500zM5 0v7l4-3.500z" /></Svg>
          <Svg w={4} h={12} color="#666"><path d="M0 0h1v12h-1zM3 0h1v12h-1z" /></Svg>
          <MenuGlyph />
        </PanelTools>
      </PanelTabs>
      <PanelBody>
        <LayerList>
          {LAYERS.map((layer, i) => (
            <LayerRow key={i} onClick={() => setSelected(i)}>
              <EyeCell type="button" aria-label="Zichtbaarheid"><Eye /></EyeCell>
              <LayerColor />
              <LayerName $level={layer.level} $on={i === selected}>
                <span>{!layer.leaf && (layer.open ? <Down s={10} /> : <Svg w={9} h={9}><path d="M3 0v9l5-4.500z" /></Svg>)}</span>
                <b>{layer.name}</b>
                {layer.pen && <IconButton as="span" $w={22} $h={13}><Pen /></IconButton>}
                <Target $kind={layer.target} />
              </LayerName>
            </LayerRow>
          ))}
        </LayerList>
        <LayerScroll><Up /><i /><Down /></LayerScroll>
      </PanelBody>
      <PanelFooter>
        <span>Pagina: 1, 1 laag</span>
        <IconButton $w={11} type="button" aria-label="Nieuwe laag"><PageNew /></IconButton>
        <IconButton $w={11} $ml={18} type="button" aria-label="Laag verwijderen"><Trash /></IconButton>
        <ResizeCorner>
          <Svg w={9} h={9} color="#111">
            <path d="M8 0h1v1h-1zM6 2h1v1h-1zM8 2h1v1h-1zM4 4h1v1h-1zM6 4h1v1h-1zM8 4h1v1h-1zM2 6h1v1h-1zM4 6h1v1h-1zM6 6h1v1h-1zM8 6h1v1h-1zM0 8h1v1h-1zM2 8h1v1h-1zM4 8h1v1h-1zM6 8h1v1h-1zM8 8h1v1h-1z" />
          </Svg>
        </ResizeCorner>
      </PanelFooter>
      <PanelGrip><Grip /></PanelGrip>
    </FloatingPanel>
  );
}

export default function App() {
  return (
    <Shell>
      <GlobalStyle />
      <MenuBar>
        {MENUS.map((name) => <MenuItem key={name} type="button">{name}</MenuItem>)}
      </MenuBar>
      <Controls />
      <Workspace>
        <Tools />
        <Center>
          <TabStrip>
            <DocumentTab>
              <span>*visitekaartje_digitaal_cc.indd @ 300%</span>
              <IconButton $w={7} type="button" aria-label="Sluiten">
                <Svg w={6} h={6} {...line}><path d="M.5.5l5 5M5.500.5l-5 5" strokeWidth="1.500" /></Svg>
              </IconButton>
            </DocumentTab>
          </TabStrip>
          <DocumentRow>
            <Structure />
            <Splitter />
            <DocumentCanvas />
            <DocumentScroll />
          </DocumentRow>
        </Center>
        <Dock>
          <DockHeader><Svg w={3} h={6}><path d="M3 0v6l-3-3z" /></Svg></DockHeader>
          {DOCK.map((group, i) => (
            <DockGroup key={i}>
              <DockGrip><Grip /></DockGrip>
              {group.map(([icon, label]) => (
                <DockItem key={label} type="button" $on={label === 'Lagen'}>
                  <DockIcon>{DOCK_ICONS[icon]}</DockIcon>
                  {label}
                </DockItem>
              ))}
            </DockGroup>
          ))}
        </Dock>
        <LayersPanel />
      </Workspace>
    </Shell>
  );
}
